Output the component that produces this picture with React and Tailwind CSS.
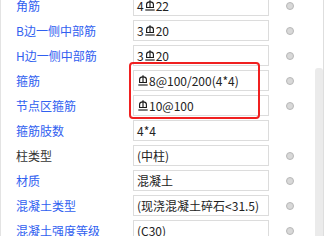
import React from "react";

const Rebar = () => (
  <svg width="10" height="11" viewBox="0 0 10 11" className="inline-block align-[-1px] mx-[1px]" fill="none" stroke="#1a1a1a" strokeWidth="1.15">
    <path d="M1.6 7.5 V4.2 Q1.6 1.8 5 1.8 Q8.4 1.8 8.4 4.2 V7.5 Z" />
    <path d="M5 0.2 V7.5" />
    <path d="M0.3 10 H9.7" />
  </svg>
);

const rows = [
  { label: "角筋", value: <>4<Rebar />22</>, dot: true },
  { label: "B边一侧中部筋", value: <>3<Rebar />20</>, dot: true },
  { label: "H边一侧中部筋", value: <>3<Rebar />20</>, dot: true },
  { label: "箍筋", value: <><Rebar />8@100/200(4*4)</>, dot: true },
  { label: "节点区箍筋", value: <><Rebar />10@100</>, dot: true },
  { label: "箍筋肢数", value: "4*4", dot: false },
  { label: "柱类型", value: "(中柱)", dot: true, black: true },
  { label: "材质", value: "混凝土", dot: true },
  { label: "混凝土类型", value: "(现浇混凝土碎石<31.5)", dot: true },
  { label: "混凝土强度等级", value: "(C30)", dot: true },
];

export default function App() {
  return (
    <div
      className="relative w-[327px] h-[236px] overflow-hidden bg-white flex"
      style={{ fontFamily: '"Noto Sans CJK SC", "Noto Sans", sans-serif' }}
    >
      <div className="w-px h-full bg-[#e3e3e3]" />
      <div className="relative w-[314px] h-full">
        <div className="flex flex-col mt-[-5px]">
          {rows.map((r, i) => (
            <div key={i} className="flex items-start h-[25px]">
              <div
                className={`w-[132px] pl-[15px] h-[21px] flex items-center text-[12px] leading-none whitespace-nowrap ${
                  r.black ? "text-[#333333]" : "text-[#3060f0]"
                }`}
              >
                {r.label}
              </div>
              <div className="w-[136px] h-[21px] border border-[#dcdcdc] flex items-center pl-[3px] text-[12px] leading-none text-[#222222] whitespace-nowrap">
                {r.value}
              </div>
              <div className="w-[46px] h-[21px] flex items-center pl-[17px]">
                {r.dot && (
                  <div className="w-[8px] h-[8px] rounded-full bg-[#d8d8d8] border border-[#b8b8b8]" />
                )}
              </div>
            </div>
          ))}
        </div>
        <div className="absolute left-[128px] top-[62px] w-[131px] h-[57px] border-[2.5px] border-[#f02020] rounded-[4px]" />
      </div>
      <div className="w-[8px] h-full flex flex-col">
        <div className="h-[68px]" />
        <div className="flex-1 bg-[#ebebeb] rounded-t-[3px]" />
      </div>
      <div className="w-px h-full bg-[#dedede]" />
      <div className="flex-1" />
    </div>
  );
}
